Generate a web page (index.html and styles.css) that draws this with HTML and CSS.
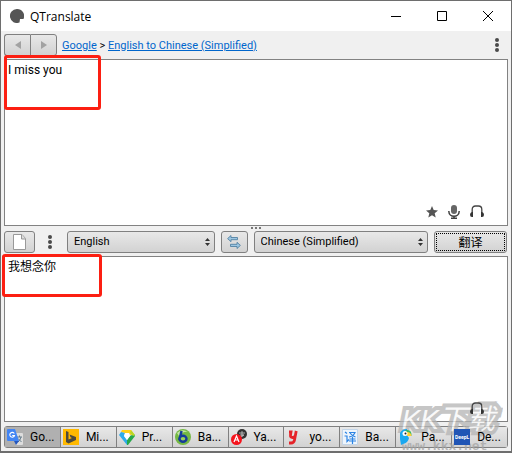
FILE: index.html
```html
<!DOCTYPE html>
<html lang="en">
<head>
    <meta charset="UTF-8">
    <meta name="viewport" content="width=device-width, initial-scale=1.0">
    <title>QTranslate</title>
    <link rel="stylesheet" href="styles.css">
</head>
<body>

    <div class="window">
        <header class="titlebar">
            <svg class="app-icon" width="14" height="14" viewBox="0 0 14 14"><path d="M7 0A7 7 0 1 0 9.500 13.500L10 10h3.500A7 7 0 0 0 7 0z" fill="#555"/></svg>
            <h1>QTranslate</h1>
            <button aria-label="Minimize"><svg width="10" height="10"><path d="M0 5.5h10" stroke="#000"/></svg></button>
            <button aria-label="Maximize"><svg width="10" height="10"><path d="M.5.5h9v9h-9z" fill="none" stroke="#000"/></svg></button>
            <button aria-label="Close"><svg width="10" height="10"><path d="M0 0l10 10M10 0L0 10" stroke="#000"/></svg></button>
        </header>

        <nav class="toolbar">
            <div class="history">
                <button class="btn" aria-label="Back"><svg width="6" height="8"><path d="M6 0v8L0 4z" fill="#a2a2a2"/></svg></button>
                <button class="btn" aria-label="Forward"><svg width="6" height="8"><path d="M0 0v8l6-4z" fill="#a2a2a2"/></svg></button>
            </div>
            <p><a href="#">Google</a> &gt; <a href="#">English to Chinese (Simplified)</a></p>
            <button class="dots" aria-label="Menu"><svg width="4" height="14" fill="#4a4a4a"><circle cx="2" cy="2" r="2"/><circle cx="2" cy="7" r="2"/><circle cx="2" cy="12" r="2"/></svg></button>
        </nav>

        <section class="pane">
            <textarea aria-label="Source text" spellcheck="false">I miss you</textarea>
            <div class="mark mark-source"></div>
            <div class="pane-tools">
                <button aria-label="Favorite"><svg width="12" height="12" viewBox="0 0 12 12"><path d="M6 0l1.7 4.1 4.3.4-3.3 2.8 1 4.2L6 9.2l-3.7 2.3 1-4.2L0 4.5l4.3-.4z" fill="#555"/></svg></button>
                <button aria-label="Speak"><svg width="12" height="14" viewBox="0 0 12 14"><rect x="3" width="6" height="9" rx="3" fill="#666"/><path d="M.8 6c0 7 10.4 7 10.4 0M6 11v2M3 13.2h6" fill="none" stroke="#3e3e3e" stroke-width="1.5"/></svg></button>
                <button aria-label="Listen"><svg width="14" height="13" viewBox="0 0 14 13"><path d="M2.2 10V4.5Q2.2 1 5.5 1h3Q11.8 1 11.8 4.5V10" fill="none" stroke="#444" stroke-width="1.3"/><path d="M3 7v5H2Q0 12 0 9.8T2 7zM11 7v5h1q2 0 2-2.200T12 7z" fill="#333"/></svg></button>
            </div>
        </section>

        <div class="splitter"><i></i><i></i><i></i></div>

        <div class="controls">
            <button class="btn clear" aria-label="New"><svg width="13" height="16" viewBox="0 0 13 16"><path d="M.5.5H9L12.500 4.500v11H.5z" fill="#fff" stroke="#999"/><path d="M8.500.5v4.500h4" fill="#ddd" stroke="#999"/></svg></button>
            <button class="dots" aria-label="Options"><svg width="4" height="14" fill="#4a4a4a"><circle cx="2" cy="2" r="2"/><circle cx="2" cy="7" r="2"/><circle cx="2" cy="12" r="2"/></svg></button>
            <div class="select select-from">
                <select class="btn" aria-label="From"><option>English</option></select>
                <svg width="5" height="8"><path d="M0 3h5L2.500 0zM0 5h5L2.500 8z" fill="#333"/></svg>
            </div>
            <button class="btn swap" aria-label="Swap languages"><svg width="14" height="14" viewBox="0 0 14 14"><path d="M.6 3.600L4 .5v2h6.500v2.200H4v2zM13.400 10.400L10 7.300v2H3.500v2.200H10v2z" fill="#9cc6e2" stroke="#46789c" stroke-width=".8"/></svg></button>
            <div class="select select-to">
                <select class="btn" aria-label="To"><option>Chinese (Simplified)</option></select>
                <svg width="5" height="8"><path d="M0 3h5L2.500 0zM0 5h5L2.500 8z" fill="#333"/></svg>
            </div>
            <button class="btn translate" lang="zh">翻译</button>
        </div>

        <section class="pane">
            <textarea aria-label="Translation" spellcheck="false" lang="zh">我想念你</textarea>
            <div class="mark mark-result"></div>
            <div class="pane-tools">
                <button aria-label="Listen"><svg width="14" height="13" viewBox="0 0 14 13"><path d="M2.2 10V4.5Q2.2 1 5.5 1h3Q11.8 1 11.8 4.5V10" fill="none" stroke="#444" stroke-width="1.3"/><path d="M3 7v5H2Q0 12 0 9.8T2 7zM11 7v5h1q2 0 2-2.200T12 7z" fill="#333"/></svg></button>
            </div>
        </section>

        <div class="tabs">
            <button class="tab active">
                <svg width="16" height="16" viewBox="0 0 16 16"><path d="M7 4h8q1 0 1 1v10q0 1-1 1H9z" fill="#ddd"/><path d="M10 8h5M12.500 6.500V8M14 8q-1 4-3 5M11 9.500l3.500 3.500" fill="none" stroke="#667d8b"/><path d="M1 0h7l4 12H1q-1 0-1-1V1q0-1 1-1z" fill="#4285f4"/><path d="M7 12h5l-3 4z" fill="#2457be"/><path d="M7.300 4.600A2.400 2.400 0 1 0 7.500 6.500H5.200" fill="none" stroke="#fff" stroke-width="1.100"/></svg>
                <span>Go...</span>
            </button>
            <button class="tab">
                <svg width="16" height="16" viewBox="0 0 16 16"><path d="M0 0h16v16H0z" fill="#ffb900"/><path d="M3 2l2.500 1v7.500L9 9 7.500 8.300 6.500 5.600 13 8v3l-7.500 3.500L3 13z" fill="#4d4a3e"/></svg>
                <span>Mi...</span>
            </button>
            <button class="tab">
                <svg width="16" height="16" viewBox="0 0 16 16"><path d="M3 1h9l3 4-4 1-1-2H6L2 3z" fill="#ffcf16"/><path d="M2 3l4 1-1 3 3 4v5L0 6z" fill="#2fabe9"/><path d="M15 5l1 2-7 9H8v-5l3-4z" fill="#25a84a"/><path d="M12 1l4 5-2 1-3-3z" fill="#b8d626"/><path d="M6 4h4l1 3-3 4-3-4z" fill="#fff"/></svg>
                <span>Pr...</span>
            </button>
            <button class="tab">
                <svg width="16" height="16" viewBox="0 0 16 16"><circle cx="8" cy="8" r="8" fill="#75b843"/><path d="M2 4q5-5 11-1-5-1-9 4z" fill="#c4e7a3"/><path d="M6.500 2L4.500 11" fill="none" stroke="#153b9b" stroke-width="2.500"/><ellipse cx="8" cy="9.800" rx="3.500" ry="3" fill="#9bd05a" stroke="#153b9b" stroke-width="2.400"/></svg>
                <span>Ba...</span>
            </button>
            <button class="tab">
                <svg width="16" height="16" viewBox="0 0 16 16"><circle cx="11" cy="5" r="5" fill="#333"/><path d="M8 4h6M11 2v2M9 6h4M11 4v4M9 8l4-2" stroke="#ccc" fill="none" stroke-width=".8"/><circle cx="5.500" cy="10.500" r="5.500" fill="#f5141d"/><path d="M3 13l2.500-6L8 13M4 11h3" fill="none" stroke="#fff" stroke-width="1.200"/></svg>
                <span>Ya...</span>
            </button>
            <button class="tab">
                <svg width="16" height="16" viewBox="0 0 16 16"><path d="M3 3h2L4.500 6q-.3 2.500 2 2.500 2.500 0 3-2.500l.7-4-1.700 9q-.5 3-3.500 3H3" fill="none" stroke="#e52329" stroke-width="2.800"/></svg>
                <span>yo...</span>
            </button>
            <button class="tab">
                <svg width="16" height="16" viewBox="0 0 16 16"><path d="M.5.5h15v15H.5z" fill="#eef5fc" stroke="#c3d5e8"/><path d="M3 3l2 1.500M2.500 7H5v5.500l2-2M7 3.500h6q-2 4-6 4.500M8 4q2 3 5.500 4M7.500 10h6M7 12h7M10.500 8v7" fill="none" stroke="#2c84e4" stroke-width="1.200"/></svg>
                <span>Ba...</span>
            </button>
            <button class="tab">
                <svg width="16" height="16" viewBox="0 0 16 16"><path d="M2 4q2-4 7-4v6l2 3q-1 5-6 6l-2 1-1-6z" fill="#19a8f0"/><path d="M8 1q6-1 5.500 6L10 5.500 6 7q-1-4 2-6z" fill="#36b867"/><path d="M9 3q4 0 4.500 4L9 7z" fill="#ffcf2f"/><circle cx="7" cy="4.500" r="2.500" fill="#fff"/><circle cx="7.500" cy="4.500" r="1" fill="#222"/></svg>
                <span>Pa...</span>
            </button>
            <button class="tab">
                <span class="deepl">DeepL</span>
                <span>De...</span>
            </button>
        </div>

        <div class="watermark">
            <strong lang="zh">KK下载</strong>
            <span>www.kkx.net</span>
        </div>
    </div>

</body>
</html>
```
FILE: styles.css
```css
* {
    box-sizing: border-box;
}

body {
    margin: 0;
    font-family: Roboto, "Noto Sans CJK SC", sans-serif;
    font-size: 11px;
    color: #000;
}

button,
select,
textarea {
    font: inherit;
    color: inherit;
    margin: 0;
}

button {
    display: flex;
    align-items: center;
    justify-content: center;
    padding: 0;
    border: none;
    background: none;
}

svg {
    display: block;
    flex: none;
}

.window {
    position: relative;
    display: flex;
    flex-direction: column;
    height: 100vh;
    border: 1px solid #6e6e6e;
    border-bottom-width: 2px;
    background-color: #f0f0f0;
    overflow: hidden;
}

/* Title bar */
.titlebar {
    display: flex;
    align-items: center;
    height: 30px;
    padding-left: 9px;
    background-color: #fff;
}

.titlebar h1 {
    flex: 1;
    margin: 0 0 0 6px;
    font-family: "Open Sans", sans-serif;
    font-size: 12px;
    font-weight: normal;
}

.titlebar button {
    width: 46px;
    height: 30px;
}

/* Toolbar */
.toolbar {
    display: flex;
    align-items: center;
    height: 28px;
    padding: 0 12px 0 3px;
}

.toolbar p {
    flex: 1;
    margin: 0 0 0 5px;
}

.toolbar a {
    color: #0066cc;
}

.history {
    display: flex;
}

.history .btn {
    width: 27px;
}

.history .btn:first-child {
    width: 26px;
    border-radius: 3px 0 0 3px;
    border-right: none;
}

.history .btn:last-child {
    border-radius: 0 3px 3px 0;
}

.btn {
    height: 22px;
    border: 1px solid #808080;
    border-radius: 3px;
    background: linear-gradient(#e8e8e8, #d2d2d2);
}

.dots {
    width: 4px;
}

/* Text panes */
.pane {
    position: relative;
    display: flex;
    flex: 1;
    margin: 0 3px;
}

.pane textarea {
    flex: 1;
    min-width: 0;
    padding: 3px;
    border: 1px solid #828282;
    outline: none;
    resize: none;
    background-color: #fff;
    font-size: 12px;
    line-height: 14px;
}

.pane-tools {
    position: absolute;
    right: 24px;
    bottom: 7px;
    z-index: 1;
    display: flex;
    align-items: center;
    gap: 10px;
}

.mark {
    position: absolute;
    border: 3px solid #fc1f12;
    border-radius: 3px;
}

.mark-source {
    left: 0;
    top: -4px;
    width: 97px;
    height: 55px;
}

.mark-result {
    left: -2px;
    top: -2px;
    width: 100px;
    height: 43px;
}

.splitter {
    display: flex;
    justify-content: center;
    align-items: center;
    gap: 2px;
    height: 5px;
}

.splitter i {
    width: 2px;
    height: 2px;
    background-color: #777;
}

/* Language row */
.controls {
    display: flex;
    align-items: center;
    gap: 6px;
    margin: 0 4px 3px 3px;
}

.clear {
    width: 31px;
}

.controls .dots {
    margin: 0 9px 0 7px;
}

.select {
    position: relative;
    min-width: 0;
}

.select-from {
    flex: 148;
}

.select-to {
    flex: 175;
}

.select select {
    display: block;
    width: 100%;
    padding: 0 16px 0 6px;
    appearance: none;
}

.select svg {
    position: absolute;
    right: 5px;
    top: 7px;
}

.swap {
    width: 27px;
}

.translate {
    width: 73px;
    font-size: 12px;
    outline: 1px dotted #000;
    outline-offset: -3px;
}

/* Service tabs */
.tabs {
    display: flex;
    height: 22px;
    margin: 4px 3px 3px;
    border: 1px solid #808080;
    border-radius: 3px;
}

.tab {
    flex: 1;
    justify-content: flex-start;
    gap: 7px;
    padding-left: 2px;
    background: linear-gradient(#e8e8e8, #d2d2d2);
    font-size: 12px;
}

.tab svg,
.tab span {
    position: relative;
    z-index: 1;
}

.tab + .tab {
    border-left: 1px solid #808080;
}

.tab.active {
    background: #b0b0b0;
}

.tab .deepl {
    width: 16px;
    background-color: #2055b5;
    color: #fff;
    font-size: 5px;
    font-weight: bold;
    line-height: 16px;
    text-align: center;
}

/* Site stamp in the corner */
.watermark {
    position: absolute;
    right: 4px;
    bottom: -3px;
    display: flex;
    flex-direction: column;
    color: #f8f8f8;
    opacity: 0.75;
    pointer-events: none;
}

.watermark strong {
    font-family: "Liberation Sans", "Noto Sans CJK SC", sans-serif;
    font-size: 28px;
    font-style: italic;
    font-weight: normal;
    line-height: 40px;
    word-break: keep-all;
    padding-right: 12px;
    -webkit-text-stroke: 8px #b4b4b4;
    paint-order: stroke fill;
}

.watermark span {
    color: #a4a4a4;
    font-family: "Liberation Mono", monospace;
    font-size: 13px;
    font-weight: bold;
    line-height: 14px;
}
```
